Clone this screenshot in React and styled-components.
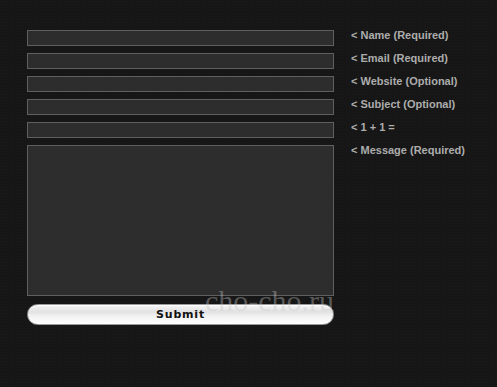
import React from 'react';
import styled, {createGlobalStyle} from 'styled-components';

const GlobalStyle = createGlobalStyle`
  html, body {
    margin: 0;
    padding: 0;
    background-color: #161616;
  }
  body {
    font-family: "Liberation Sans", "DejaVu Sans", sans-serif;
    min-height: 387px;
  }
`

const Page = styled.div`
  position: relative;
  width: 497px;
  height: 387px;
  background-color: #161616;
  background-image: radial-gradient(rgba(255,255,255,0.025) 1px, transparent 1px);
  background-size: 3px 3px;
  overflow: hidden;
`

const Form = styled.form`
  display: flex;
  flex-direction: column;
  gap: 7px;
  padding: 30px 0 0 27px;
`

const Row = styled.div`
  display: grid;
  grid-template-columns: 307px auto;
  column-gap: 17px;
  align-items: start;
`

const Field = styled.input`
  box-sizing: border-box;
  width: 307px;
  height: 16px;
  margin: 0;
  padding: 0 4px;
  background-color: #2d2d2d;
  border: 1px solid #5f5f5f;
  color: #ccc;
  font-size: 11px;
  outline: none;
`

const Area = styled.textarea`
  box-sizing: border-box;
  width: 307px;
  height: 151px;
  margin: 0;
  padding: 4px;
  resize: none;
  background-color: #2d2d2d;
  border: 1px solid #5f5f5f;
  color: #ccc;
  outline: none;
`

const Label = styled.label`
  font-family: "Liberation Sans", "DejaVu Sans", sans-serif;
  font-size: 11px;
  font-weight: bold;
  line-height: 12px;
  margin-top: -1px;
  color: #adadad;
  white-space: nowrap;
`

const Submit = styled.button`
  box-sizing: border-box;
  width: 307px;
  height: 21px;
  margin-top: 1px;
  padding: 0;
  border: 1px solid #9a9a9a;
  border-radius: 11px;
  background: linear-gradient(to bottom, #f6f6f6 0%, #e2e2e2 35%, #f2f2f2 60%, #ffffff 100%);
  box-shadow: inset 0 1px 0 #ffffff;
  color: #111;
  font-family: "DejaVu Sans", "Liberation Sans", sans-serif;
  font-size: 11px;
  font-weight: bold;
  letter-spacing: 0.8px;
`

const Watermark = styled.div`
  position: absolute;
  left: 205px;
  top: 284px;
  font-family: "Liberation Serif", serif;
  font-size: 30px;
  color: rgba(200,200,200,0.38);
  pointer-events: none;
`

const fields = [
    'Name (Required)',
    'Email (Required)',
    'Website (Optional)',
    'Subject (Optional)',
    '1 + 1 =',
];

function App() {
    return (
        <Page>
            <GlobalStyle/>
            <Form onSubmit={e => e.preventDefault()}>
                {fields.map(text =>
                    <Row key={text}>
                        <Field type="text"/>
                        <Label>&lt; {text}</Label>
                    </Row>
                )}
                <Row>
                    <Area/>
                    <Label>&lt; Message (Required)</Label>
                </Row>
                <Row>
                    <Submit type="submit">Submit</Submit>
                </Row>
            </Form>
            <Watermark>cho-cho.ru</Watermark>
        </Page>
    );
}

export default App;
